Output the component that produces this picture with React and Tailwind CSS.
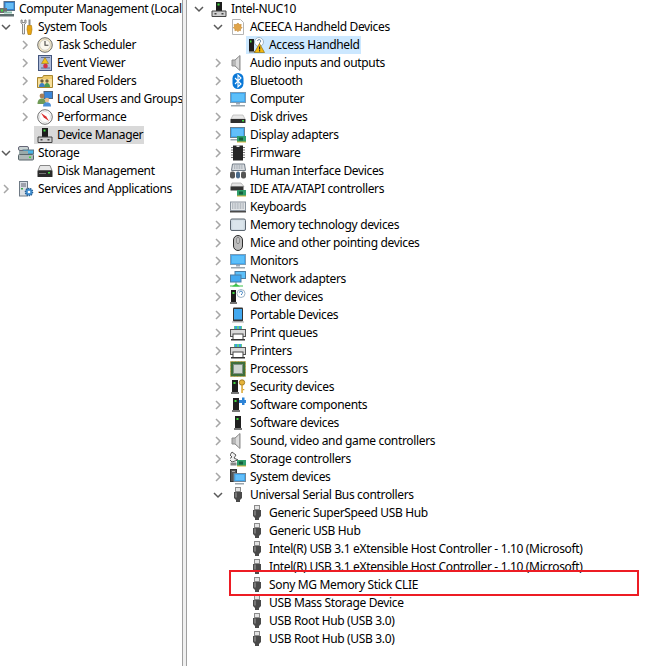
const Svg = ({ children }) => (
  <svg viewBox="0 0 16 16" width="16" height="16" className="shrink-0 block">
    {children}
  </svg>
);

const Chevron = ({ open }) => (
  <svg viewBox="0 0 10 10" width="10" height="10" className="block">
    {open ? (
      <path d="M1 3l4 4 4-4" fill="none" stroke="#595959" strokeWidth="1.5" />
    ) : (
      <path d="M3 1l4 4-4 4" fill="none" stroke="#a6a6a6" strokeWidth="1.5" />
    )}
  </svg>
);

const Tower = ({ x = 0 }) => (
  <g transform={`translate(${x} 0)`}>
    <rect x="3" y="1" width="6" height="12" fill="#1f1f1f" />
    <rect x="4.5" y="3" width="2" height="2" fill="#3fdc3f" />
    <rect x="2" y="13" width="8" height="2" fill="#777" />
  </g>
);

const Usb = () => (
  <Svg>
    <rect x="5.5" y="0.5" width="5" height="4" fill="#e4e4e4" stroke="#8a8a8a" />
    <path d="M4 5h8v6l-2 2v2H6v-2l-2-2z" fill="#4a4a4a" />
    <rect x="5" y="5.5" width="2" height="5" fill="#777" />
  </Svg>
);

const Monitor = () => (
  <Svg>
    <rect x="0.5" y="1.5" width="15" height="10" fill="#43a9f0" stroke="#7d9db5" />
    <rect x="2" y="3" width="12" height="7" fill="#5cc0fa" />
    <rect x="6" y="12" width="4" height="1.5" fill="#9ab" />
    <rect x="1" y="14" width="14" height="1.5" fill="#9aa5ad" />
  </Svg>
);

const Speaker = () => (
  <Svg>
    <path d="M10 0.5v15L5 11H2V5h3z" fill="#b8b8b8" stroke="#8c8c8c" />
    <path d="M6 5l3-3v12l-3-3z" fill="#dcdcdc" />
  </Svg>
);

const Board = () => (
  <g>
    <rect x="7" y="9" width="9" height="6" fill="#2f9e6b" />
    <rect x="9" y="10.5" width="4" height="3" fill="#14603e" />
    <rect x="7" y="14.5" width="9" height="1" fill="#d6b13c" />
  </g>
);

const icons = {
  computerManagement: (
    <Svg>
      <rect x="5" y="0.5" width="11" height="9" fill="#2f7fd0" stroke="#5a6f85" />
      <rect x="6.5" y="2" width="8" height="6" fill="#66bdf5" />
      <rect x="0" y="7" width="8" height="5" fill="#6f6f6f" />
      <rect x="2" y="8.5" width="2" height="2" fill="#3fdc3f" />
      <rect x="0" y="13" width="15" height="2.5" fill="#5e6e6e" />
      <rect x="5" y="10.5" width="8" height="2" fill="#8ba" />
    </Svg>
  ),
  systemTools: (
    <Svg>
      <path d="M3 1v3l1.5 1v10h2V5L8 4V1L6.8 1v2.5h-2.6V1z" fill="#f2f2f2" stroke="#6e6e6e" strokeWidth="0.8" />
      <rect x="10.5" y="0.5" width="2" height="6" fill="#8c8c8c" />
      <path d="M9.5 6.5h4l0.5 4-1 5h-3l-1-5z" fill="#e8a512" stroke="#a97400" strokeWidth="0.6" />
    </Svg>
  ),
  taskScheduler: (
    <Svg>
      <circle cx="8" cy="8" r="7.3" fill="#f3e7c4" stroke="#6d6d6d" />
      <circle cx="8" cy="8" r="5.3" fill="#fbf8ee" stroke="#b5b5b5" strokeWidth="0.6" />
      <path d="M8 4v4.3h3.4" fill="none" stroke="#444" strokeWidth="1.1" />
    </Svg>
  ),
  eventViewer: (
    <Svg>
      <rect x="1.5" y="0.5" width="13" height="15" fill="#aebbd8" stroke="#44567e" />
      <path d="M4 2.5h9M4 13h9" stroke="#5c6f97" />
      <path d="M8 2.5l3.5 6h-7z" fill="#f4c21c" stroke="#8a6a00" strokeWidth="0.5" />
      <circle cx="8.5" cy="11" r="2.3" fill="#d2344a" />
    </Svg>
  ),
  sharedFolders: (
    <Svg>
      <path d="M0.5 4.5h5l1-2h9v12h-15z" fill="#edc96b" stroke="#a8872f" />
      <path d="M1 6h14v8H1z" fill="#f7df9b" />
      <circle cx="5" cy="8" r="1.7" fill="#6f5f3a" />
      <path d="M2 14c0-3 1.5-4 3-4s3 1 3 4z" fill="#3f7fc4" />
      <circle cx="10" cy="8" r="1.7" fill="#6f5f3a" />
      <path d="M7.5 14c0-3 1-4 2.5-4s3 1 3 4z" fill="#4b9a52" />
    </Svg>
  ),
  localUsers: (
    <Svg>
      <rect x="7" y="0.5" width="8.5" height="7" fill="#3a86d8" stroke="#51657c" />
      <circle cx="5" cy="5" r="2.4" fill="#a97f56" />
      <path d="M0.5 13c0-4 2-5.5 4.5-5.5S9 9 9 13z" fill="#6f9a55" />
      <circle cx="10" cy="9" r="2.2" fill="#e8bd8f" />
      <path d="M6 15.5c0-3 1.5-4.2 4-4.2s4 1.2 4 4.2z" fill="#4c8fd6" />
    </Svg>
  ),
  performance: (
    <Svg>
      <circle cx="8" cy="8" r="7.3" fill="#fff" stroke="#6d6d6d" />
      <circle cx="8" cy="8" r="5.5" fill="#fff" stroke="#c9c9c9" strokeWidth="0.6" />
      <path d="M4 4l5.2 3.4L12 12 6.8 8.6z" fill="#d92f2f" />
    </Svg>
  ),
  deviceManager: (
    <Svg>
      <rect x="5" y="1" width="6" height="9" fill="#1c1c1c" />
      <rect x="6.5" y="2.5" width="2" height="2" fill="#3fdc3f" />
      <path d="M1 10h14v5.5H1z" fill="#cfcfcf" stroke="#444" />
      <rect x="3.5" y="12" width="2" height="1.5" fill="#444" />
      <rect x="10.5" y="12" width="2" height="1.5" fill="#444" />
    </Svg>
  ),
  storage: (
    <Svg>
      <rect x="0.5" y="1.5" width="10" height="4" rx="1.5" fill="#c8d2d2" stroke="#667" />
      <rect x="5" y="5" width="10.5" height="4" fill="#48b4e8" stroke="#5b7686" />
      <rect x="1" y="6" width="9" height="3" fill="#9aa" />
      <rect x="0.5" y="9.5" width="15" height="5.5" rx="1" fill="#aeb8b8" stroke="#58656a" />
      <rect x="11" y="11.5" width="2" height="1.5" fill="#3fdc3f" />
    </Svg>
  ),
  disk: (
    <Svg>
      <path d="M3 2.5h10l2 5H1z" fill="#e6e6e6" stroke="#888" />
      <rect x="0.5" y="7.5" width="15" height="6.5" rx="0.5" fill="#2b2b2b" />
      <rect x="11" y="9" width="2" height="1.5" fill="#3fdc3f" />
      <rect x="2" y="10" width="7" height="1" fill="#777" />
    </Svg>
  ),
  services: (
    <Svg>
      <rect x="1.5" y="0.5" width="8" height="14.5" fill="#d9dee3" stroke="#6f7a85" />
      <path d="M3 3h5M3 5h5" stroke="#667" />
      <rect x="3" y="7" width="2" height="1.5" fill="#3fa64a" />
      <circle cx="11" cy="11" r="3.6" fill="#3f8ed0" stroke="#2a5f92" strokeDasharray="1.4 0.8" strokeWidth="1.4" />
      <circle cx="11" cy="11" r="1.3" fill="#fff" />
    </Svg>
  ),
  aceeca: (
    <Svg>
      <path d="M2.5 0.5h8l3 3v12h-11z" fill="#fff" stroke="#b5b5b5" />
      <path d="M8 4l1.3 1.6 2-.2-.4 2 1.3 1.4-1.7 1 0 2-1.9-.5L8 12.8 6.8 11.3l-1.9.5 0-2-1.7-1 1.3-1.4-.4-2 2 .2z" fill="#e0a44a" stroke="#b77a24" strokeWidth="0.5" />
    </Svg>
  ),
  accessHandheld: (
    <Svg>
      <rect x="0" y="2" width="5" height="12" fill="#1c1c1c" />
      <rect x="1" y="3.5" width="1.5" height="2" fill="#3fdc3f" />
      <rect x="0" y="14" width="6" height="1.5" fill="#777" />
      <circle cx="10" cy="5" r="4.5" fill="#fff" stroke="#9fb4c4" />
      <path d="M8.5 4a1.6 1.6 0 1 1 2 1.7v1" fill="none" stroke="#6d8ba3" />
      <path d="M10.5 6.5l5 9h-10z" fill="#f5b90f" stroke="#7d6000" strokeWidth="0.6" />
      <rect x="10" y="9.5" width="1.2" height="3" fill="#222" />
      <rect x="10" y="13.2" width="1.2" height="1.2" fill="#222" />
    </Svg>
  ),
  speaker: <Speaker />,
  bluetooth: (
    <Svg>
      <rect x="2.5" y="0" width="11" height="16" rx="5.5" fill="#0a78d7" />
      <path d="M5 5l6 6-3 3V2l3 3-6 6" fill="none" stroke="#fff" strokeWidth="1.1" />
    </Svg>
  ),
  monitor: <Monitor />,
  diskDrive: (
    <Svg>
      <path d="M3 6h10l2 4H1z" fill="#e8e8e8" stroke="#aaa" strokeWidth="0.6" />
      <rect x="0.5" y="10" width="15" height="4" rx="0.5" fill="#2e2e2e" />
      <rect x="12" y="11" width="2" height="1.5" fill="#3fdc3f" />
    </Svg>
  ),
  display: (
    <Svg>
      <rect x="0.5" y="0.5" width="14" height="10" fill="#43a9f0" stroke="#677f92" />
      <rect x="2" y="2" width="11" height="7" fill="#62bffa" />
      <rect x="0.5" y="12" width="7" height="1.5" fill="#9aa5ad" />
      <Board />
    </Svg>
  ),
  firmware: (
    <Svg>
      <rect x="3" y="0.5" width="10" height="15" fill="#262626" />
      <path d="M1 2.5h2M1 5h2M1 7.5h2M1 10h2M1 12.5h2M13 2.5h2M13 5h2M13 7.5h2M13 10h2M13 12.5h2" stroke="#777" />
      <rect x="6.5" y="0.5" width="3" height="1.5" fill="#e8e8e8" />
    </Svg>
  ),
  hid: (
    <Svg>
      <path d="M2.5 1h12l1 6.5H1.5z" fill="#d8dce0" stroke="#707a85" />
      <path d="M4 3h9M4 5h9" stroke="#8b949e" strokeDasharray="1 0.7" />
      <rect x="0" y="8.5" width="5" height="7" rx="2" fill="#555" />
      <rect x="6" y="8.5" width="4" height="7" rx="2" fill="#4a6a8a" />
      <rect x="11" y="8.5" width="5" height="7" rx="2" fill="#555" />
    </Svg>
  ),
  ide: (
    <Svg>
      <path d="M2 2h9l3 3.5H1z" fill="#e4e4e4" stroke="#999" strokeWidth="0.6" />
      <rect x="0.5" y="5.5" width="13" height="4" fill="#333" />
      <Board />
    </Svg>
  ),
  keyboard: (
    <Svg>
      <rect x="0.5" y="3" width="15" height="8.5" fill="#e2e5e8" stroke="#8b949e" />
      <path d="M2 5h12M2 7h12M2 9h12" stroke="#8b949e" strokeDasharray="1 0.6" />
      <rect x="0" y="12" width="16" height="1.5" fill="#4a4a4a" />
    </Svg>
  ),
  memory: (
    <Svg>
      <rect x="0.5" y="2" width="15" height="11.5" rx="1.5" fill="#cfdae3" stroke="#5c6670" />
      <rect x="2.5" y="3.5" width="11" height="8.5" fill="#dbe5ec" />
    </Svg>
  ),
  mouse: (
    <Svg>
      <rect x="3.5" y="0.5" width="9" height="15" rx="4.5" fill="#bcbcbc" stroke="#2e2e2e" />
      <rect x="7" y="2.5" width="2" height="6" rx="1" fill="#fff" stroke="#333" strokeWidth="0.6" />
    </Svg>
  ),
  network: (
    <Svg>
      <rect x="5" y="0.5" width="10.5" height="7" fill="#5cc0fa" stroke="#4b7da3" />
      <rect x="0.5" y="4" width="10.5" height="7" fill="#43a9f0" stroke="#4b7da3" />
      <path d="M6 11v2" stroke="#69a" />
      <path d="M2 15.5l4-3 4 3z" fill="#3fc24a" />
      <rect x="0" y="14.5" width="13" height="1" fill="#3fc24a" />
    </Svg>
  ),
  other: (
    <Svg>
      <rect x="1" y="1" width="5" height="12" fill="#1c1c1c" />
      <rect x="2.5" y="3" width="2" height="2" fill="#3fdc3f" />
      <rect x="0" y="13" width="7" height="2" fill="#777" />
      <circle cx="11" cy="4.5" r="4" fill="#fff" stroke="#9fb4c4" />
      <path d="M9.5 3.5a1.5 1.5 0 1 1 2 1.5v1" fill="none" stroke="#3a7fc0" />
    </Svg>
  ),
  portable: (
    <Svg>
      <rect x="3" y="0.5" width="10" height="14" rx="1" fill="#333" />
      <rect x="4" y="2" width="8" height="10.5" fill="#43a9f0" />
      <rect x="2" y="14.5" width="12" height="1" fill="#aaa" />
    </Svg>
  ),
  printQueue: (
    <Svg>
      <rect x="4" y="1" width="8" height="4" fill="#5ccf8a" />
      <path d="M5 1h2v3H5zM9 1h2v3H9z" fill="#3f9fe0" />
      <rect x="0.5" y="4.5" width="15" height="7" fill="#d9d9d9" stroke="#555" />
      <rect x="3" y="9" width="10" height="5.5" fill="#fff" stroke="#444" />
      <rect x="1" y="14" width="14" height="1.5" fill="#333" />
    </Svg>
  ),
  processor: (
    <Svg>
      <rect x="0.5" y="0.5" width="15" height="15" fill="#3f6f3a" stroke="#b8a24a" strokeDasharray="1 0.5" />
      <rect x="3.5" y="3.5" width="9" height="9" fill="#cfd6d0" stroke="#7f8f85" />
    </Svg>
  ),
  security: (
    <Svg>
      <Tower x="-1" />
      <circle cx="12" cy="3.5" r="2.7" fill="#e6b33a" stroke="#94701a" strokeWidth="0.8" />
      <rect x="11.3" y="6" width="1.5" height="8" fill="#d9a52f" />
      <rect x="12.8" y="10" width="1.5" height="1.2" fill="#d9a52f" />
    </Svg>
  ),
  softwareComponents: (
    <Svg>
      <Tower />
      <path d="M9 3h3V0.5h2.5V3H16v3h-1.5v2H12V6H9z" fill="#2d83d6" />
    </Svg>
  ),
  softwareDevices: (
    <Svg>
      <Tower x="2" />
    </Svg>
  ),
  storageController: (
    <Svg>
      <path d="M2 1l4 3-2 3 4 2-6 2-3-3 3-2-2-2z" fill="#efefef" stroke="#333" strokeWidth="0.8" />
      <Board />
      <rect x="0.5" y="11.5" width="6" height="3" fill="#888" />
    </Svg>
  ),
  system: (
    <Svg>
      <rect x="0.5" y="0.5" width="6" height="12" fill="#555" stroke="#333" />
      <rect x="2" y="2" width="3" height="1" fill="#aaa" />
      <rect x="4" y="4.5" width="11.5" height="8" fill="#43a9f0" stroke="#70879a" />
      <rect x="5.5" y="6" width="8.5" height="5" fill="#62bffa" />
      <rect x="5" y="14" width="9" height="1.5" fill="#9aa5ad" />
    </Svg>
  ),
  usb: <Usb />,
};

// depth sets the chevron and icon column, same steps as the mmc tree
const Row = ({ depth, arrow, icon, label, selected }) => (
  <div className="flex h-[18px] items-center" style={{ paddingLeft: depth * 19 }}>
    <div className="-ml-[23px] mr-[4px] flex w-[19px] shrink-0 items-center justify-center">
      {arrow && <Chevron open={arrow === "open"} />}
    </div>
    <div className={`-ml-[4px] flex h-[18px] items-center pl-[3px] pr-[1px] ${selected || ""}`}>
      {icons[icon]}
      <span className="ml-[4px] whitespace-nowrap">{label}</span>
    </div>
  </div>
);

const leftTree = [
  [0, null, "computerManagement", "Computer Management (Local"],
  [1, "open", "systemTools", "System Tools"],
  [2, "closed", "taskScheduler", "Task Scheduler"],
  [2, "closed", "eventViewer", "Event Viewer"],
  [2, "closed", "sharedFolders", "Shared Folders"],
  [2, "closed", "localUsers", "Local Users and Groups"],
  [2, "closed", "performance", "Performance"],
  [2, null, "deviceManager", "Device Manager", "bg-[#d9d9d9]"],
  [1, "open", "storage", "Storage"],
  [2, null, "disk", "Disk Management"],
  [1, "closed", "services", "Services and Applications"],
];

const rightTree = [
  [1, "open", "deviceManager", "Intel-NUC10"],
  [2, "open", "aceeca", "ACEECA Handheld Devices"],
  [3, null, "accessHandheld", "Access Handheld", "bg-[#cce8ff]"],
  [2, "closed", "speaker", "Audio inputs and outputs"],
  [2, "closed", "bluetooth", "Bluetooth"],
  [2, "closed", "monitor", "Computer"],
  [2, "closed", "diskDrive", "Disk drives"],
  [2, "closed", "display", "Display adapters"],
  [2, "closed", "firmware", "Firmware"],
  [2, "closed", "hid", "Human Interface Devices"],
  [2, "closed", "ide", "IDE ATA/ATAPI controllers"],
  [2, "closed", "keyboard", "Keyboards"],
  [2, "closed", "memory", "Memory technology devices"],
  [2, "closed", "mouse", "Mice and other pointing devices"],
  [2, "closed", "monitor", "Monitors"],
  [2, "closed", "network", "Network adapters"],
  [2, "closed", "other", "Other devices"],
  [2, "closed", "portable", "Portable Devices"],
  [2, "closed", "printQueue", "Print queues"],
  [2, "closed", "printQueue", "Printers"],
  [2, "closed", "processor", "Processors"],
  [2, "closed", "security", "Security devices"],
  [2, "closed", "softwareComponents", "Software components"],
  [2, "closed", "softwareDevices", "Software devices"],
  [2, "closed", "speaker", "Sound, video and game controllers"],
  [2, "closed", "storageController", "Storage controllers"],
  [2, "closed", "system", "System devices"],
  [2, "open", "usb", "Universal Serial Bus controllers"],
  [3, null, "usb", "Generic SuperSpeed USB Hub"],
  [3, null, "usb", "Generic USB Hub"],
  [3, null, "usb", "Intel(R) USB 3.1 eXtensible Host Controller - 1.10 (Microsoft)"],
  [3, null, "usb", "Intel(R) USB 3.1 eXtensible Host Controller - 1.10 (Microsoft)"],
  [3, null, "usb", "Sony MG Memory Stick CLIE"],
  [3, null, "usb", "USB Mass Storage Device"],
  [3, null, "usb", "USB Root Hub (USB 3.0)"],
  [3, null, "usb", "USB Root Hub (USB 3.0)"],
];

const renderRows = (rows) =>
  rows.map(([depth, arrow, icon, label, selected], i) => (
    <Row key={i} depth={depth} arrow={arrow} icon={icon} label={label} selected={selected} />
  ));

export default function App() {
  return (
    <div className="relative flex h-[666px] w-[649px] overflow-hidden bg-white font-['Noto_Sans',sans-serif] text-[12px] tracking-[-0.34px] text-black">
      <div className="w-[182px] shrink-0 overflow-hidden">{renderRows(leftTree)}</div>
      <div className="flex w-[5px] shrink-0 border-x border-[#a0a0a0] bg-[#f0f0f0]" />
      <div className="flex-1 overflow-hidden pl-[6px]">{renderRows(rightTree)}</div>
      {/* red annotation box from the screenshot */}
      <div className="absolute left-[229px] top-[570px] h-[26px] w-[410px] border-2 border-[#ed1c24]" />
    </div>
  );
}
